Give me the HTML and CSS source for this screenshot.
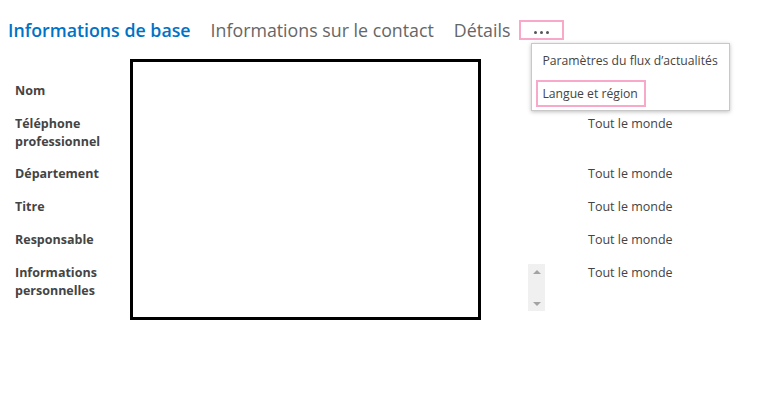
FILE: index.html
```html
<!DOCTYPE html>
<html lang="fr">
<head>
    <meta charset="UTF-8">
    <title>Modifier le profil</title>
    <link rel="stylesheet" href="styles.css">
</head>
<body>
    <div class="tabs">
        <a class="tab active">Informations de base</a>
        <a class="tab">Informations sur le contact</a>
        <a class="tab">Détails</a>
        <div class="more-wrap">
            <button class="more-button"><span></span><span></span><span></span></button>
            <ul class="more-menu">
                <li class="menu-item">Paramètres du flux d’actualités</li>
                <li class="menu-item selected">Langue et région</li>
            </ul>
        </div>
    </div>

    <div class="profile-form">
        <div class="field-box"></div>

        <!-- la visibilité de "Nom" est cachée sous le menu -->
        <div class="label row-nom">Nom</div>

        <div class="label row-tel">Téléphone professionnel</div>
        <div class="privacy row-tel">Tout le monde</div>

        <div class="label row-dep">Département</div>
        <div class="privacy row-dep">Tout le monde</div>

        <div class="label row-titre">Titre</div>
        <div class="privacy row-titre">Tout le monde</div>

        <div class="label row-resp">Responsable</div>
        <div class="privacy row-resp">Tout le monde</div>

        <div class="label row-info">Informations personnelles</div>
        <div class="scroller row-info">
            <span class="arrow up"></span>
            <span class="arrow down"></span>
        </div>
        <div class="privacy row-info">Tout le monde</div>
    </div>
</body>
</html>
```

FILE: styles.css
```css
:root {
    --blue: #0072c6;
    --text: #444444;
    --muted: #666666;
    --pink: #f8a9c9;
}

* {
    box-sizing: border-box;
    margin: 0;
    padding: 0;
}

body {
    background: #ffffff;
    color: var(--text);
    font-family: 'Open Sans', 'Noto Sans', Arial, sans-serif;
    font-size: 12.5px;
    width: 762px;
    height: 394px;
    overflow: hidden;
}

/* onglets */
.tabs {
    display: flex;
    align-items: center;
    gap: 20px;
    height: 40px;
    padding: 19px 0 0 8px;
}

.tab {
    font-size: 17.8px;
    color: var(--muted);
    line-height: 22px;
}

.tab.active {
    color: var(--blue);
    font-weight: 600;
}

.more-wrap {
    position: relative;
    margin-left: -11px;
}

.more-button {
    display: flex;
    justify-content: center;
    align-items: center;
    gap: 3px;
    width: 45px;
    height: 20px;
    border: 2px solid var(--pink);
    background: #fff;
    padding-top: 6px;
}

.more-button span {
    width: 3px;
    height: 3px;
    border-radius: 50%;
    background: #555;
}

.more-menu {
    position: absolute;
    top: 23px;
    left: 12px;
    width: 199px;
    height: 68px;
    list-style: none;
    background: #fff;
    border: 1px solid #c8c8c8;
    box-shadow: 0 1px 4px rgba(0,0,0,0.25);
    padding: 3px 0 0 4px;
    z-index: 2;
}

.menu-item {
    font-size: 12.2px;
    line-height: 19px;
    padding: 2px 6px 2px 4px;
    margin-bottom: 6px;
    color: var(--text);
    white-space: nowrap;
    width: fit-content;
    border: 2px solid transparent;
}

.menu-item.selected {
    border-color: var(--pink);
}

/* formulaire */
.profile-form {
    display: grid;
    grid-template-columns: 115px 351px 64px auto;
    grid-template-rows: 7px 17px 34px 17px 17px 17px 34px;
    row-gap: 16px;
    padding: 19px 0 0 15px;
}

.field-box {
    grid-column: 2;
    grid-row: 1 / -1;
    width: 351px;
    height: 261px;
    border: 3px solid #000;
}

.label {
    grid-column: 1;
    font-weight: 700;
    font-size: 12.5px;
    line-height: 17.5px;
    color: var(--text);
    width: 95px;
}

.privacy {
    grid-column: 4;
    margin-left: 43px;
    line-height: 17px;
    color: var(--text);
}

.row-nom { grid-row: 2; }
.row-tel { grid-row: 3; }
.row-dep { grid-row: 4; }
.row-titre { grid-row: 5; }
.row-resp { grid-row: 6; }
.row-info { grid-row: 7; }

.scroller {
    grid-column: 3;
    justify-self: end;
    width: 17px;
    height: 47px;
    background: #f0f0f0;
    display: flex;
    flex-direction: column;
    justify-content: space-between;
    align-items: center;
    padding: 6px 0 5px;
}

.arrow {
    width: 0;
    height: 0;
    border-left: 4px solid transparent;
    border-right: 4px solid transparent;
}

.arrow.up {
    border-bottom: 4px solid #a3a3a3;
}

.arrow.down {
    border-top: 4px solid #a3a3a3;
}
```
